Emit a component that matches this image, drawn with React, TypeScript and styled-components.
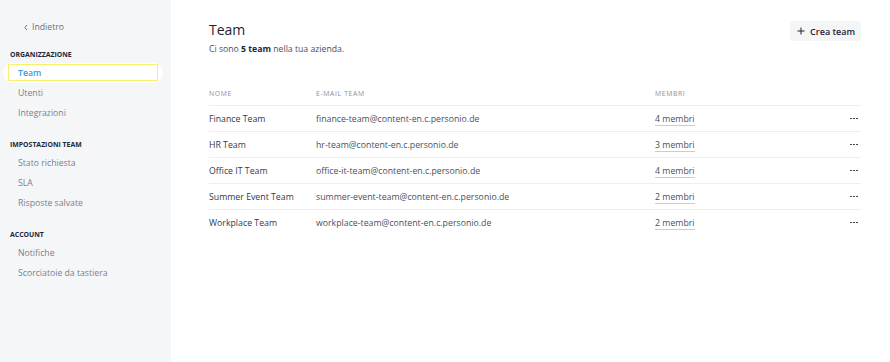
import React from "react";
import styled, { createGlobalStyle } from "styled-components";

const Global = createGlobalStyle`
  html, body { margin: 0; padding: 0; background: #fff; }
  body { font-family: "Open Sans", "Liberation Sans", sans-serif; color: #2b2f3a; }
  * { box-sizing: border-box; }
`;

const Page = styled.div`
  display: flex;
  width: 890px;
  height: 362px;
  overflow: hidden;
`;

const Sidebar = styled.aside`
  width: 171px;
  flex-shrink: 0;
  background: #f5f6f8;
  padding: 19px 0 0 0;
  display: flex;
  flex-direction: column;
`;

const Back = styled.div`
  font-size: 8.7px;
  color: #6b7080;
  padding-left: 23px;
  height: 16px;
  line-height: 16px;
  margin-bottom: 14px;
  display: flex;
  align-items: center;
  gap: 3px;
`;

const Section = styled.div`
  display: flex;
  flex-direction: column;
  margin-bottom: 16px;
`;

const SectionTitle = styled.div`
  font-size: 6.9px;
  font-weight: 700;
  color: #22263a;
  padding-left: 10px;
  height: 12px;
  line-height: 12px;
  margin-bottom: 2px;
`;

const Item = styled.div<{ $active?: boolean }>`
  font-size: 8.7px;
  height: 20px;
  line-height: 20px;
  padding-left: 15px;
  margin: 0 8px 0 3px;
  color: ${(p) => (p.$active ? "#3a97d8" : "#7a7f8c")};
  font-weight: ${(p) => (p.$active ? 600 : 400)};
  background: ${(p) => (p.$active ? "#fff" : "transparent")};
  border-radius: ${(p) => (p.$active ? "10px" : "0")};
  position: relative;
  ${(p) =>
    p.$active
      ? `&::after { content: ""; position: absolute; left: 5px; right: 5px; top: 1px; bottom: 2px; border: 1.5px solid #f7f26a; }`
      : ""}
`;

const Main = styled.main`
  flex: 1;
  padding: 20px 29px 0 38px;
  display: flex;
  flex-direction: column;
`;

const Header = styled.div`
  display: flex;
  justify-content: space-between;
  align-items: flex-start;
`;

const TitleBlock = styled.div`
  display: flex;
  flex-direction: column;
`;

const Title = styled.h1`
  margin: 0;
  font-size: 14px;
  font-weight: 400;
  color: #1f2233;
  line-height: 20px;
`;

const Subtitle = styled.p`
  margin: 2px 0 0 0;
  font-size: 8.7px;
  color: #4a4f5c;
  line-height: 14px;
  b { font-weight: 700; color: #22263a; }
`;

const CreateButton = styled.button`
  margin-top: 1px;
  height: 20px;
  padding: 0 6px 0 7px;
  border: none;
  border-radius: 3px;
  background: #f4f5f7;
  font-family: inherit;
  font-size: 9px;
  font-weight: 600;
  color: #1f2233;
  display: flex;
  align-items: center;
  gap: 5px;
`;

const Table = styled.div`
  margin-top: 25px;
  display: flex;
  flex-direction: column;
`;

const Row = styled.div<{ $head?: boolean }>`
  display: grid;
  grid-template-columns: 107px 339px 1fr 20px;
  align-items: center;
  height: ${(p) => (p.$head ? "25px" : "26px")};
  border-bottom: 1px solid #eceef1;
  &:last-child { border-bottom-color: transparent; }
`;

const HeadCell = styled.div`
  font-size: 6.8px;
  letter-spacing: 0.65px;
  color: #8a8fa0;
  text-transform: uppercase;
`;

const Cell = styled.div<{ $strong?: boolean }>`
  font-size: 8.75px;
  color: ${(p) => (p.$strong ? "#33374a" : "#4a4f5c")};
  white-space: nowrap;
`;

const Members = styled.span`
  font-size: 8.75px;
  color: #4a4f5c;
  border-bottom: 1px solid #c9ccd3;
`;

const Dots = styled.div`
  display: flex;
  gap: 1.5px;
  justify-content: flex-end;
  padding-right: 3px;
  span { width: 1.6px; height: 1.6px; background: #2b2f3a; border-radius: 50%; display: block; }
`;

const teams = [
  { name: "Finance Team", email: "finance-team@content-en.c.personio.de", members: 4 },
  { name: "HR Team", email: "hr-team@content-en.c.personio.de", members: 3 },
  { name: "Office IT Team", email: "office-it-team@content-en.c.personio.de", members: 4 },
  { name: "Summer Event Team", email: "summer-event-team@content-en.c.personio.de", members: 2 },
  { name: "Workplace Team", email: "workplace-team@content-en.c.personio.de", members: 2 },
];

export default function App() {
  return (
    <>
      <Global />
      <Page>
        <Sidebar>
          <Back>
            <svg width="6" height="7" viewBox="0 0 6 7"><path d="M4 1 L1.8 3.5 L4 6" stroke="#6b7080" strokeWidth="1" fill="none" /></svg>
            Indietro
          </Back>
          <Section>
            <SectionTitle>ORGANIZZAZIONE</SectionTitle>
            <Item $active>Team</Item>
            <Item>Utenti</Item>
            <Item>Integrazioni</Item>
          </Section>
          <Section>
            <SectionTitle>IMPOSTAZIONI TEAM</SectionTitle>
            <Item>Stato richiesta</Item>
            <Item>SLA</Item>
            <Item>Risposte salvate</Item>
          </Section>
          <Section>
            <SectionTitle>ACCOUNT</SectionTitle>
            <Item>Notifiche</Item>
            <Item>Scorciatoie da tastiera</Item>
          </Section>
        </Sidebar>
        <Main>
          <Header>
            <TitleBlock>
              <Title>Team</Title>
              <Subtitle>
                Ci sono <b>5 team</b> nella tua azienda.
              </Subtitle>
            </TitleBlock>
            <CreateButton>
              <svg width="8" height="8" viewBox="0 0 8 8"><path d="M4 0.5 V7.5 M0.5 4 H7.5" stroke="#1f2233" strokeWidth="1" /></svg>
              Crea team
            </CreateButton>
          </Header>
          <Table>
            <Row $head>
              <HeadCell>Nome</HeadCell>
              <HeadCell>E-mail team</HeadCell>
              <HeadCell>Membri</HeadCell>
              <div />
            </Row>
            {teams.map((t) => (
              <Row key={t.name}>
                <Cell $strong>{t.name}</Cell>
                <Cell>{t.email}</Cell>
                <Cell>
                  <Members>{t.members} membri</Members>
                </Cell>
                <Dots>
                  <span />
                  <span />
                  <span />
                </Dots>
              </Row>
            ))}
          </Table>
        </Main>
      </Page>
    </>
  );
}
